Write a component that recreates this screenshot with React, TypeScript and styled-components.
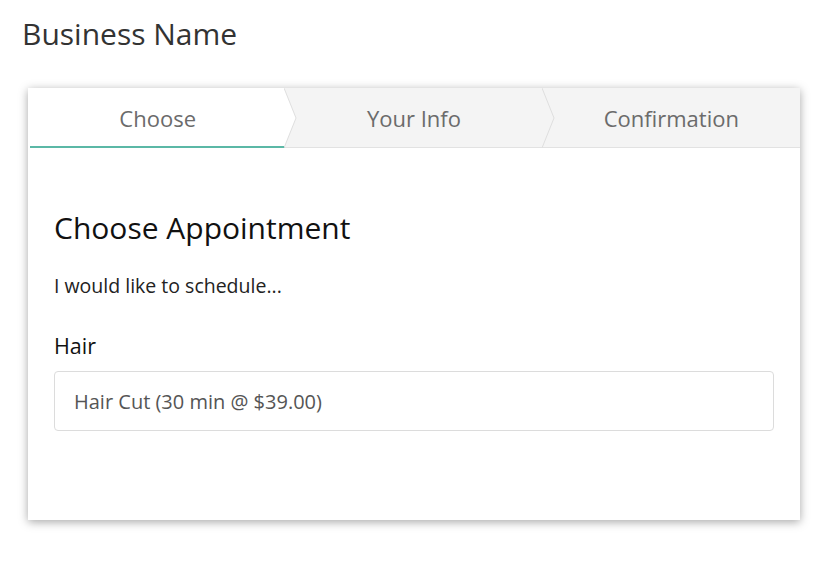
import React from "react";
import styled, { createGlobalStyle } from "styled-components";

const GlobalStyle = createGlobalStyle`
  body {
    margin: 0;
    background: #fff;
    font-family: "Open Sans", Roboto, "Liberation Sans", sans-serif;
  }
`;

const Page = styled.div`
  padding: 16px 33px 40px 22px;
`;

const BusinessName = styled.h1`
  margin: 0 0 36px;
  font-size: 30px;
  font-weight: 400;
  color: #333;
  line-height: 36px;
`;

const Card = styled.div`
  margin-left: 6px;
  width: 772px;
  background: #fff;
  box-shadow: 0 2px 9px rgba(0, 0, 0, 0.35);
`;

const Steps = styled.div`
  display: grid;
  grid-template-columns: repeat(3, 1fr);
  height: 60px;
`;

const Step = styled.div<{ $active?: boolean }>`
  position: relative;
  display: flex;
  align-items: center;
  justify-content: center;
  background: ${(p) => (p.$active ? "#fff" : "#f4f4f4")};
  border-bottom: ${(p) => (p.$active ? "2px solid #5bb8a6" : "1px solid #e2e2e2")};
  margin-left: ${(p) => (p.$active ? "2px" : "0")};
  font-size: 22px;
  color: #6b6b6b;
  padding-top: ${(p) => (p.$active ? "1px" : "0")};
`;

const Arrow = styled.svg`
  position: absolute;
  top: 0;
  right: -13px;
  z-index: 1;
`;

const Body = styled.div`
  padding: 62px 26px 89px;
`;

const Heading = styled.h2`
  margin: 0 0 28px;
  font-size: 30px;
  font-weight: 400;
  color: #111;
  line-height: 36px;
`;

const Lead = styled.p`
  margin: 0 0 35px;
  font-size: 19.5px;
  color: #222;
  line-height: 24px;
`;

const Label = styled.label`
  display: block;
  margin-bottom: 12px;
  font-size: 21.5px;
  color: #111;
  line-height: 26px;
`;

const Select = styled.div`
  height: 58px;
  display: flex;
  align-items: center;
  padding: 0 19px;
  border: 1px solid #dcdcdc;
  border-radius: 4px;
  font-size: 20px;
  color: #555;
`;

const ChevronArrow: React.FC<{ fill: string }> = ({ fill }) => (
  <Arrow width="14" height="60" viewBox="0 0 14 60">
    <polygon points="0,0 12,30 0,60" fill={fill} />
    <polyline points="0,0 12,30 0,60" fill="none" stroke="#dedede" strokeWidth="1" />
  </Arrow>
);

const STEPS = ["Choose", "Your Info", "Confirmation"];

const App: React.FC = () => (
  <>
    <GlobalStyle />
    <Page>
      <BusinessName>Business Name</BusinessName>
      <Card>
        <Steps>
          {STEPS.map((label, index) => (
            <Step key={label} $active={index === 0}>
              {label}
              {index < STEPS.length - 1 && <ChevronArrow fill={index === 0 ? "#fff" : "#f4f4f4"} />}
            </Step>
          ))}
        </Steps>
        <Body>
          <Heading>Choose Appointment</Heading>
          <Lead>I would like to schedule...</Lead>
          <Label>Hair</Label>
          <Select>Hair Cut (30 min @ $39.00)</Select>
        </Body>
      </Card>
    </Page>
  </>
);

export default App;
